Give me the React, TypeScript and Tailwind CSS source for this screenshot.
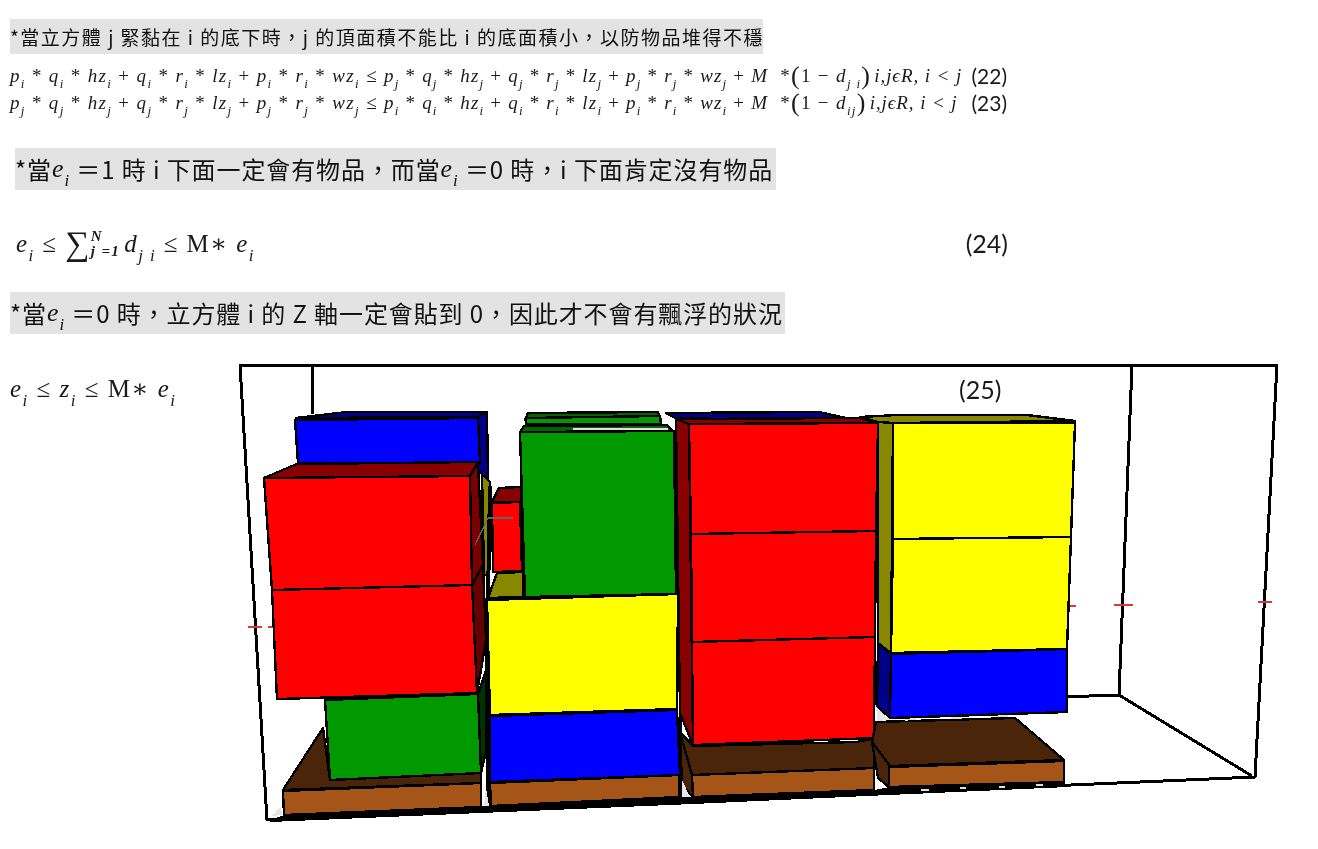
import React from "react";

const CJK = "font-['Noto_Sans_CJK_TC','Noto_Sans',sans-serif]";
const MATH = "font-['Liberation_Serif','DejaVu_Serif',serif]";

function V({ b, s }: { b: string; s?: string }) {
  return (
    <span className="italic">
      {b}
      {s && <sub className="text-[0.68em] align-[-0.25em]">{s}</sub>}
    </span>
  );
}

function Side({ p, q, r }: { p: string; q: string; r: string }) {
  return (
    <>
      <V b="p" s={p} /> * <V b="q" s={p} /> * <V b="hz" s={p} /> + <V b="q" s={p} /> * <V b="r" s={p} /> * <V b="lz" s={p} /> + <V b="p" s={p} /> * <V b="r" s={p} /> * <V b="wz" s={p} />
      {" "}≤{" "}
      <span className="tracking-[1.2px]">
        <V b="p" s={q} /> * <V b="q" s={q} /> * <V b="hz" s={q} /> + <V b="q" s={q} /> * <V b="r" s={q} /> * <V b="lz" s={q} /> + <V b="p" s={q} /> * <V b="r" s={q} /> * <V b="wz" s={q} />
        {" "}+ <V b="M" />{"  "}*
      </span>
      <span className="text-[26px] leading-[20px] align-[-2px] font-light">(</span>1 − <V b="d" s={r} />
      <span className="text-[26px] leading-[20px] align-[-2px] font-light">)</span>
      <span className="italic ml-[3px] tracking-[0.9px]">i,jϵR, i &lt; j</span>
    </>
  );
}

function EqLine({ p, q, r, n }: { p: string; q: string; r: string; n: string }) {
  return (
    <div className={`${MATH} ml-[10px] w-[997px] h-[27px] flex items-center justify-between text-[19px] leading-none tracking-[1.35px] text-[#1a1a1a] whitespace-pre`}>
      <span><Side p={p} q={q} r={r} /></span>
      <span className="font-['Lato',sans-serif] text-[21px] tracking-normal">{n}</span>
    </div>
  );
}

type P = [string, string];

const RED = "#ff0000", DRED = "#880000", BLUE = "#0000ff", DBLUE = "#000088";
const GREEN = "#009900", DGREEN = "#006600", YEL = "#ffff00", OLV = "#888800";
const BR = "#a55518", DBR = "#4a2509";

function Chart() {
  const back: P[] = [
    ["296,418 347,412 487,412 478,417", DBLUE],
    ["478,417 487,412 488,480 478,470", DBLUE],
    ["295,420 478,418 480,463 298,463", BLUE],
    ["283,790 323,728 330,780 481,773 481,783", DBR],
    ["283,791 481,783 481,807 284,815", BR],
    ["478,695 486,670 488,743 481,773", "#003300"],
    ["325,700 478,694 481,773 330,780", GREEN],
    ["482,473 490,482 488,575 484,575", OLV],
    ["492,502 499,488 521,487 521,502", DRED],
    ["492,503 520,502 522,571 493,572", RED],
    ["488,598 497,573 523,572 523,597", OLV],
    ["525,420 528,413 658,412 661,420", DGREEN],
    ["526,418 660,416 661,424 526,424", GREEN],
    ["520,432 524,426 667,425 674,432", DGREEN],
    ["520,432 674,431 676,594 525,597", GREEN],
  ];
  const front: P[] = [
    ["264,478 297,464 478,462 470,476", DRED],
    ["470,476 478,463 483,565 472,587", "#7a0000"],
    ["472,585 483,565 486,640 477,693", "#660000"],
    ["264,478 470,476 472,585 272,590", RED],
    ["272,590 472,585 477,693 277,699", RED],
    ["490,783 679,775 679,797 491,806", BR],
    ["490,716 677,710 680,775 490,782", BLUE],
    ["487,600 678,594 677,709 490,715", YEL],
    ["680,732 693,746 857,742 876,738 874,768 692,775", DBR],
    ["680,732 692,775 693,797 682,785", DBR],
    ["692,775 874,768 874,790 693,797", BR],
    ["666,413 819,412 864,422 676,418", DBLUE],
    ["676,419 689,424 878,423 860,418", DRED],
    ["676,419 689,424 693,745 680,713", DRED],
    ["689,424 878,423 876,531 691,534", RED],
    ["691,534 876,531 875,637 692,642", RED],
    ["692,642 875,637 874,738 693,745", RED],
    ["876,722 1015,718 1064,760 890,766 872,742", DBR],
    ["872,742 890,766 889,787 878,778", DBR],
    ["889,767 1064,761 1064,782 889,787", BR],
    ["860,417 897,415 1027,415 1075,421 893,423 878,422", OLV],
    ["878,422 893,423 891,653 878,643", OLV],
    ["878,643 891,654 890,718 877,706", DBLUE],
    ["893,423 1075,423 1071,537 893,539", YEL],
    ["893,539 1071,537 1067,649 891,653", YEL],
    ["891,654 1067,649 1067,712 890,718", BLUE],
  ];
  const draw = (list: P[]) =>
    list.map(([pts, fill]) => (
      <polygon key={pts} points={pts} fill={fill} stroke="#000" strokeWidth={2.4} strokeLinejoin="round" />
    ));
  return (
    <svg viewBox="235 360 1050 470" className="block w-[1050px] h-[470px]" shapeRendering="crispEdges">
      <g fill="none" stroke="#000" strokeWidth="3" strokeLinejoin="round">
        <line x1="312" y1="365" x2="313" y2="414" />
        <line x1="1132" y1="365" x2="1119" y2="695" />
        <line x1="1119" y1="695" x2="1060" y2="697" />
        <line x1="1119" y1="695" x2="1252" y2="776" />
        <polygon points="240,365 1277,365 1255,777 267,820" />
      </g>
      <g stroke="#d43a3a" strokeWidth="1.5">
        <line x1="1114" y1="605" x2="1133" y2="605" />
        <line x1="1258" y1="602" x2="1272" y2="602" />
        <line x1="1068" y1="606" x2="1076" y2="606" />
        <line x1="248" y1="627" x2="262" y2="627" />
        <line x1="268" y1="627" x2="273" y2="627" />
      </g>
      {draw(back)}
      <polygon points="270,820 284,815 491,806 693,797 874,790 889,787 1064,782 1068,787 889,795 693,804 270,822" fill="#000" />
      <line x1="490" y1="486" x2="488" y2="600" stroke="#000" strokeWidth="4" />
      <line x1="486" y1="600" x2="488" y2="806" stroke="#000" strokeWidth="4" />
      <line x1="680" y1="600" x2="681" y2="800" stroke="#000" strokeWidth="3" />
      {draw(front)}
      <g stroke="#666" strokeWidth="1.2" fill="none">
        <polyline points="475,545 488,518 513,518" />
      </g>
      <g fill="#e6e6e6">
        <polygon points="271,816 281,806 282,815" />
        <polygon points="484,806 486,788 489,806" />
        <polygon points="682,797 682,780 690,797" />
        <polygon points="877,708 889,720 877,721" />
      </g>
      <g stroke="#e0e0e0" strokeWidth="1.5">
        <line x1="573" y1="429" x2="668" y2="429" />
        <line x1="905" y1="720" x2="916" y2="719" />
        <line x1="951" y1="718" x2="962" y2="718" />
        <line x1="998" y1="716" x2="1008" y2="716" />
        <line x1="921" y1="790" x2="929" y2="790" />
        <line x1="960" y1="788" x2="966" y2="788" />
        <line x1="999" y1="787" x2="1005" y2="787" />
        <line x1="1036" y1="785" x2="1043" y2="785" />
      </g>
    </svg>
  );
}

function Bar({ className, children }: { className: string; children: React.ReactNode }) {
  return (
    <div className={`${CJK} bg-[#e3e3e3] whitespace-pre text-[#111] flex items-center leading-none ${className}`}>
      {children}
    </div>
  );
}

const Ei = () => (
  <span className={`${MATH} italic text-[26px]`}>
    e<sub className="text-[0.65em] align-[-0.3em]">i</sub>
  </span>
);

export default function App() {
  return (
    <div className="relative w-[1318px] h-[849px] overflow-hidden bg-white blur-[0.4px]">
      <div className="pt-[19px]">
        <Bar className="ml-[10px] w-[753px] h-[35px] text-[19px] tracking-[1.5px]">
          *當立方體 j 緊黏在 i 的底下時，j 的頂面積不能比 i 的底面積小，以防物品堆得不穩
        </Bar>
        <div className="mt-[8px]">
          <EqLine p="i" q="j" r="j i" n="(22)" />
          <EqLine p="j" q="i" r="ij" n="(23)" />
        </div>
        <Bar className="ml-[15px] mt-[32px] w-[761px] h-[42px] text-[24px] tracking-[0.9px]">
          *當<Ei /> ＝1 時 i 下面一定會有物品，而當<Ei /> ＝0 時，i 下面肯定沒有物品
        </Bar>
        <div className="ml-[16px] mt-[32px] w-[992px] h-[44px] flex items-center justify-between whitespace-pre text-[#1a1a1a]">
          <span className={`${MATH} text-[25px] tracking-[1.4px] flex items-center`}>
            <V b="e" s="i" /> ≤ <span className="text-[34px] leading-none">∑</span>
            <span className="inline-flex flex-col text-[15px] leading-[15px] italic mr-[4px] font-bold">
              <span>N</span>
              <span>j =1</span>
            </span>
            <V b="d" s="j i" /> ≤ M∗ <V b="e" s="i" />
          </span>
          <span className="font-['Lato',sans-serif] text-[25px]">(24)</span>
        </div>
        <Bar className="ml-[10px] mt-[26px] w-[775px] h-[42px] text-[24px] tracking-[0.9px]">
          *當<Ei /> ＝0 時，立方體 i 的 Z 軸一定會貼到 0，因此才不會有飄浮的狀況
        </Bar>
        <div className="flex mt-[26px]">
          <div className={`${MATH} ml-[10px] mt-[16px] w-[225px] text-[25px] tracking-[1.5px] leading-none whitespace-pre text-[#1a1a1a]`}>
            <V b="e" s="i" /> ≤ <V b="z" s="i" /> ≤ M∗ <V b="e" s="i" />
          </div>
          <Chart />
        </div>
      </div>
      <span className="absolute left-[959px] top-[375px] font-['Lato',sans-serif] text-[25px] leading-[28px] text-[#1a1a1a]">(25)</span>
    </div>
  );
}
